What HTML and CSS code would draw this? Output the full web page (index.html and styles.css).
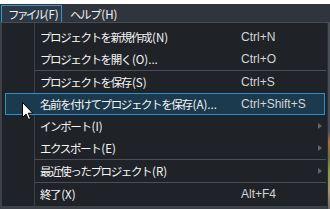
FILE: index.html
```html
<!DOCTYPE html>
<html lang="ja">
<head>
<meta charset="utf-8">
<title>Menu</title>
<link rel="stylesheet" href="styles.css">
</head>
<body>
<div class="screen">
  <div class="topstrip"></div>
  <div class="menubar">
    <div class="mb-item mb-active"><span class="tight">ファイル</span><span class="key">(F)</span></div>
    <div class="mb-item mb-next">ヘルプ<span class="key">(H)</span></div>
  </div>
  <div class="body-row">
    <div class="dropdown">
      <div class="mi"><span></span><span class="lbl">プロジェクトを新規作成<span class="key">(N)</span></span><span class="sc">Ctrl+N</span><span></span></div>
      <div class="mi"><span></span><span class="lbl">プロジェクトを開く<span class="key">(O)...</span></span><span class="sc">Ctrl+O</span><span></span></div>
      <div class="sep"></div>
      <div class="mi"><span></span><span class="lbl">プロジェクトを保存<span class="key">(S)</span></span><span class="sc">Ctrl+S</span><span></span></div>
      <div class="mi hl"><span></span><span class="lbl">名前を付けてプロジェクトを保存<span class="key">(A)...</span></span><span class="sc">Ctrl+Shift+S</span><span></span></div>
      <div class="mi"><span></span><span class="lbl">インポート<span class="key">(I)</span></span><span class="sc"></span><span class="arrow"></span></div>
      <div class="mi"><span></span><span class="lbl">エクスポート<span class="key">(E)</span></span><span class="sc"></span><span class="arrow"></span></div>
      <div class="sep"></div>
      <div class="mi"><span></span><span class="lbl">最近使ったプロジェクト<span class="key">(R)</span></span><span class="sc"></span><span class="arrow"></span></div>
      <div class="sep"></div>
      <div class="mi"><span></span><span class="lbl">終了<span class="key">(X)</span></span><span class="sc">Alt+F4</span><span></span></div>
    </div>
    <div class="edge"></div>
  </div>
  <svg class="cursor" width="12" height="19" viewBox="0 0 12 19">
    <path d="M0.5 0.5 L0.5 15.5 L4 12 L6.5 17.5 L8.6 16.6 L6.2 11.2 L10.8 11.2 Z" fill="#ffffff" stroke="#000000" stroke-width="1" stroke-linejoin="miter"/>
  </svg>
</div>
</body>
</html>
```

FILE: styles.css
```css
html, body {
  margin: 0;
  padding: 0;
}

body {
  width: 330px;
  height: 209px;
  overflow: hidden;
  background: #ffffff;
  font-family: "Noto Sans CJK JP", "Noto Sans", sans-serif;
}

.screen {
  position: relative;
  width: 330px;
  height: 209px;
  display: flex;
  flex-direction: column;
}

.topstrip {
  height: 4px;
  background: #ffffff;
}

.menubar {
  height: 18px;
  background: #30343d;
  border-bottom: 1px solid #474c54;
  display: flex;
  align-items: flex-end;
  padding-left: 1px;
}

.mb-item {
  height: 17px;
  box-sizing: border-box;
  font-size: 11.5px;
  letter-spacing: -1.4px;
  color: #f2f2f2;
  display: flex;
  align-items: center;
  white-space: nowrap;
}

.mb-item .tight {
  letter-spacing: -2.6px;
}

.mb-active {
  width: 61px;
  border: 1px solid #3b93c9;
  border-bottom: none;
  background: #2b3846;
  padding-left: 6px;
}

.mb-next {
  margin-left: 8px;
}

.key {
  letter-spacing: 0;
  margin-left: 1px;
}

.body-row {
  flex: 1;
  display: flex;
}

.dropdown {
  width: 328px;
  box-sizing: border-box;
  border-left: 2px solid #3d4249;
  border-right: 1px solid #2c3036;
  border-bottom: 3px solid #3d4249;
  padding: 3px 0 1px;
  background:
    linear-gradient(to right, transparent 32px, #3b4048 32px, #3b4048 33px, transparent 33px),
    #1f2328;
}

.mi {
  height: 22px;
  box-sizing: border-box;
  margin: 0 2px 0 3px;
  border: 1px solid transparent;
  display: grid;
  grid-template-columns: 34px 201px 77px 1fr;
  align-items: center;
}

.mi.hl {
  border-color: #2a8fd0;
  background: #1b3a4d;
}

.lbl {
  font-size: 11.5px;
  letter-spacing: -1.4px;
  color: #f5f5f5;
  white-space: nowrap;
}

.sc {
  font-family: "Liberation Sans", Arial, sans-serif;
  font-size: 12px;
  color: #d4d4d4;
  white-space: nowrap;
}

.arrow {
  width: 0;
  height: 0;
  border-left: 4px solid #5f656d;
  border-top: 3.5px solid transparent;
  border-bottom: 3.5px solid transparent;
}

.sep {
  height: 1px;
  background: #4a4f57;
  margin: 0 1px 0 33px;
}

.edge {
  width: 2px;
  background: linear-gradient(to bottom, #4a4f55 0%, #4a4f55 58%, #b86a30 64%, #6d7040 72%, #8c9a45 80%, #a8926e 90%, #6d6a66 100%);
}

.cursor {
  position: absolute;
  left: 22px;
  top: 102px;
}
```
